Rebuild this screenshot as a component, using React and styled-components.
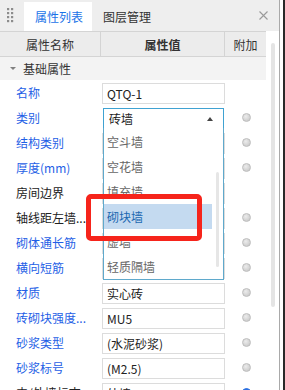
import React from "react";
import styled, { createGlobalStyle, css } from "styled-components";

const GlobalStyle = createGlobalStyle`
  html, body { margin: 0; padding: 0; background: #fff; }
  body { font-family: "Noto Sans CJK SC", "Noto Sans", sans-serif; font-size: 12px; color: #222; }
  * { box-sizing: border-box; }
`;

const Screen = styled.div`
  width: 285px;
  height: 390px;
  overflow: hidden;
  display: flex;
`;

const Panel = styled.div`
  width: 280px;
  height: 100%;
  border-right: 1px solid #a9a9a9;
  display: flex;
  flex-direction: column;
`;

const Edge = styled.div`
  width: 5px;
  height: 100%;
  background: #fff;
  border-right: 2px solid #2a2a2a;
`;

const TabBar = styled.div`
  height: 31px;
  flex: none;
  background: #eeeeee;
  display: flex;
  align-items: flex-end;
`;

const Grip = styled.div`
  width: 24px;
  align-self: stretch;
  display: flex;
  align-items: center;
  padding-left: 7px;
`;

const Tab = styled.div`
  height: 29px;
  width: 68px;
  display: flex;
  align-items: center;
  padding-left: 11px;
  font-size: 12px;
  color: #333;
  ${(p) =>
    p.$active &&
    css`
      background: #fff;
      color: #1a73e8;
    `}
`;

const Spacer = styled.div`
  flex: 1;
`;

const Close = styled.div`
  align-self: stretch;
  width: 26px;
  display: flex;
  align-items: center;
  justify-content: center;
  margin-right: 3px;
`;

const Body = styled.div`
  flex: 1;
  display: flex;
  position: relative;
`;

const Table = styled.div`
  width: 266px;
  display: flex;
  flex-direction: column;
`;

const cols = `101px 124px 41px`;

const HeaderRow = styled.div`
  display: grid;
  grid-template-columns: ${cols};
  height: 26px;
  background: #ececec;
  border-top: 1px solid #d4d4d4;
  border-bottom: 1px solid #d4d4d4;
`;

const HeaderCell = styled.div`
  display: flex;
  align-items: center;
  justify-content: center;
  border-right: 1px solid #d4d4d4;
  color: #333;
  font-weight: ${(p) => (p.$bold ? 700 : 400)};
  &:last-child { border-right: none; }
`;

const SectionRow = styled.div`
  height: 23px;
  background: #f3f3f3;
  display: flex;
  align-items: center;
  padding-left: 10px;
  gap: 7px;
  color: #333;
`;

const Triangle = styled.span`
  width: 0;
  height: 0;
  border-left: 3px solid transparent;
  border-right: 3px solid transparent;
  border-top: 3px solid #808080;
`;

const Row = styled.div`
  display: grid;
  grid-template-columns: ${cols};
  height: 25px;
`;

const Label = styled.div`
  display: flex;
  align-items: center;
  padding-left: 16px;
  white-space: nowrap;
  overflow: hidden;
  color: ${(p) => (p.$blue ? "#1f5fe6" : "#222")};
`;

const ValueCell = styled.div`
  position: relative;
  padding-top: 3px;
`;

const InputBox = styled.div`
  margin-left: 1px;
  width: 123px;
  height: 21px;
  border: 1px solid #dcdcdc;
  background: #fff;
  display: flex;
  align-items: center;
  padding-left: 4px;
  color: #222;
  white-space: nowrap;
  overflow: hidden;
`;

const SelectBox = styled.div`
  margin-left: 2px;
  width: 121px;
  height: 21px;
  border: 1px solid #3fa2d2;
  background: #fff;
  display: flex;
  align-items: center;
  justify-content: space-between;
  padding: 0 10px 0 5px;
  color: #222;
`;

const UpArrow = styled.span`
  width: 0;
  height: 0;
  border-left: 3px solid transparent;
  border-right: 3px solid transparent;
  border-bottom: 4px solid #444;
`;

const Dropdown = styled.div`
  position: absolute;
  left: 2px;
  top: 23px;
  width: 121px;
  height: 152px;
  border: 1px solid #5fa9cc;
  border-top: none;
  background: #fff;
  z-index: 2;
  padding-top: 1px;
`;

const Option = styled.div`
  height: 25px;
  width: 108px;
  display: flex;
  align-items: center;
  padding-left: 3px;
  color: #666;
  ${(p) =>
    p.$selected &&
    css`
      background: #c4daf0;
      color: #1c68b0;
    `}
`;

const ListScroll = styled.div`
  position: absolute;
  left: 112px;
  top: 44px;
  width: 3px;
  height: 95px;
  border-radius: 2px;
  background: #e6e6e6;
`;

const ExtraCell = styled.div`
  display: flex;
  align-items: center;
  justify-content: center;
  padding-left: 1px;
`;

const Dot = styled.span`
  width: 9px;
  height: 9px;
  border-radius: 50%;
  background: radial-gradient(circle at 40% 35%, #ececec, #cfcfcf 70%);
  border: 1px solid #bdbdbd;
  ${(p) =>
    p.$on &&
    css`
      background: #2a6fe0;
      border-color: #2a6fe0;
    `}
`;

const ScrollCol = styled.div`
  flex: 1;
  position: relative;
  background: #fff;
`;

const Thumb = styled.div`
  position: absolute;
  left: 5px;
  top: 12px;
  width: 4px;
  height: 264px;
  border-radius: 2px;
  background: #e4e4e4;
`;

const RedMark = styled.div`
  position: absolute;
  left: 86px;
  top: 163px;
  width: 116px;
  height: 47px;
  border: 5px solid #f6241b;
  border-radius: 5px;
  z-index: 3;
`;

const GripIcon = () => (
  <svg width="7" height="15" viewBox="0 0 7 15">
    {[0, 4, 8, 12].map((y) =>
      [0, 4].map((x) => <rect key={`${x}-${y}`} x={x} y={y} width="2.2" height="2.2" fill="#8c8c8c" />)
    )}
  </svg>
);

const CloseIcon = () => (
  <svg width="9" height="9" viewBox="0 0 9 9">
    <path d="M0.5 0.5 L8.5 8.5 M8.5 0.5 L0.5 8.5" stroke="#9a9a9a" strokeWidth="1.1" />
  </svg>
);

const rows = [
  { label: "名称", blue: true, value: "QTQ-1", dot: false },
  { label: "类别", blue: true, select: "砖墙", dot: true },
  { label: "结构类别", blue: true, value: "", dot: true },
  { label: "厚度(mm)", blue: true, value: "", dot: true },
  { label: "房间边界", blue: false, value: "", dot: false },
  { label: "轴线距左墙...", blue: false, value: "", dot: true },
  { label: "砌体通长筋", blue: true, value: "", dot: true },
  { label: "横向短筋", blue: true, value: "", dot: true },
  { label: "材质", blue: true, value: "实心砖", dot: true },
  { label: "砖砌块强度...", blue: true, value: "MU5", dot: true },
  { label: "砂浆类型", blue: true, value: "(水泥砂浆)", dot: true },
  { label: "砂浆标号", blue: true, value: "(M2.5)", dot: true },
  { label: "内/外墙标志", blue: false, value: "外墙", dot: true, on: true },
];

const options = ["空斗墙", "空花墙", "填充墙", "砌块墙", "虚墙", "轻质隔墙"];

export default function App() {
  return (
    <>
      <GlobalStyle />
      <Screen>
        <Panel>
          <TabBar>
            <Grip>
              <GripIcon />
            </Grip>
            <Tab $active>属性列表</Tab>
            <Tab>图层管理</Tab>
            <Spacer />
            <Close>
              <CloseIcon />
            </Close>
          </TabBar>
          <Body>
            <Table>
              <HeaderRow>
                <HeaderCell>属性名称</HeaderCell>
                <HeaderCell $bold>属性值</HeaderCell>
                <HeaderCell>附加</HeaderCell>
              </HeaderRow>
              <SectionRow>
                <Triangle />
                基础属性
              </SectionRow>
              {rows.map((r) => (
                <Row key={r.label}>
                  <Label $blue={r.blue}>{r.label}</Label>
                  <ValueCell>
                    {r.select ? (
                      <>
                        <SelectBox>
                          {r.select}
                          <UpArrow />
                        </SelectBox>
                        <Dropdown>
                          {options.map((o) => (
                            <Option key={o} $selected={o === "砌块墙"}>
                              {o}
                            </Option>
                          ))}
                          <ListScroll />
                        </Dropdown>
                      </>
                    ) : (
                      <InputBox>{r.value}</InputBox>
                    )}
                  </ValueCell>
                  <ExtraCell>{r.dot && <Dot $on={r.on} />}</ExtraCell>
                </Row>
              ))}
            </Table>
            <ScrollCol>
              <Thumb />
            </ScrollCol>
            <RedMark />
          </Body>
        </Panel>
        <Edge />
      </Screen>
    </>
  );
}
